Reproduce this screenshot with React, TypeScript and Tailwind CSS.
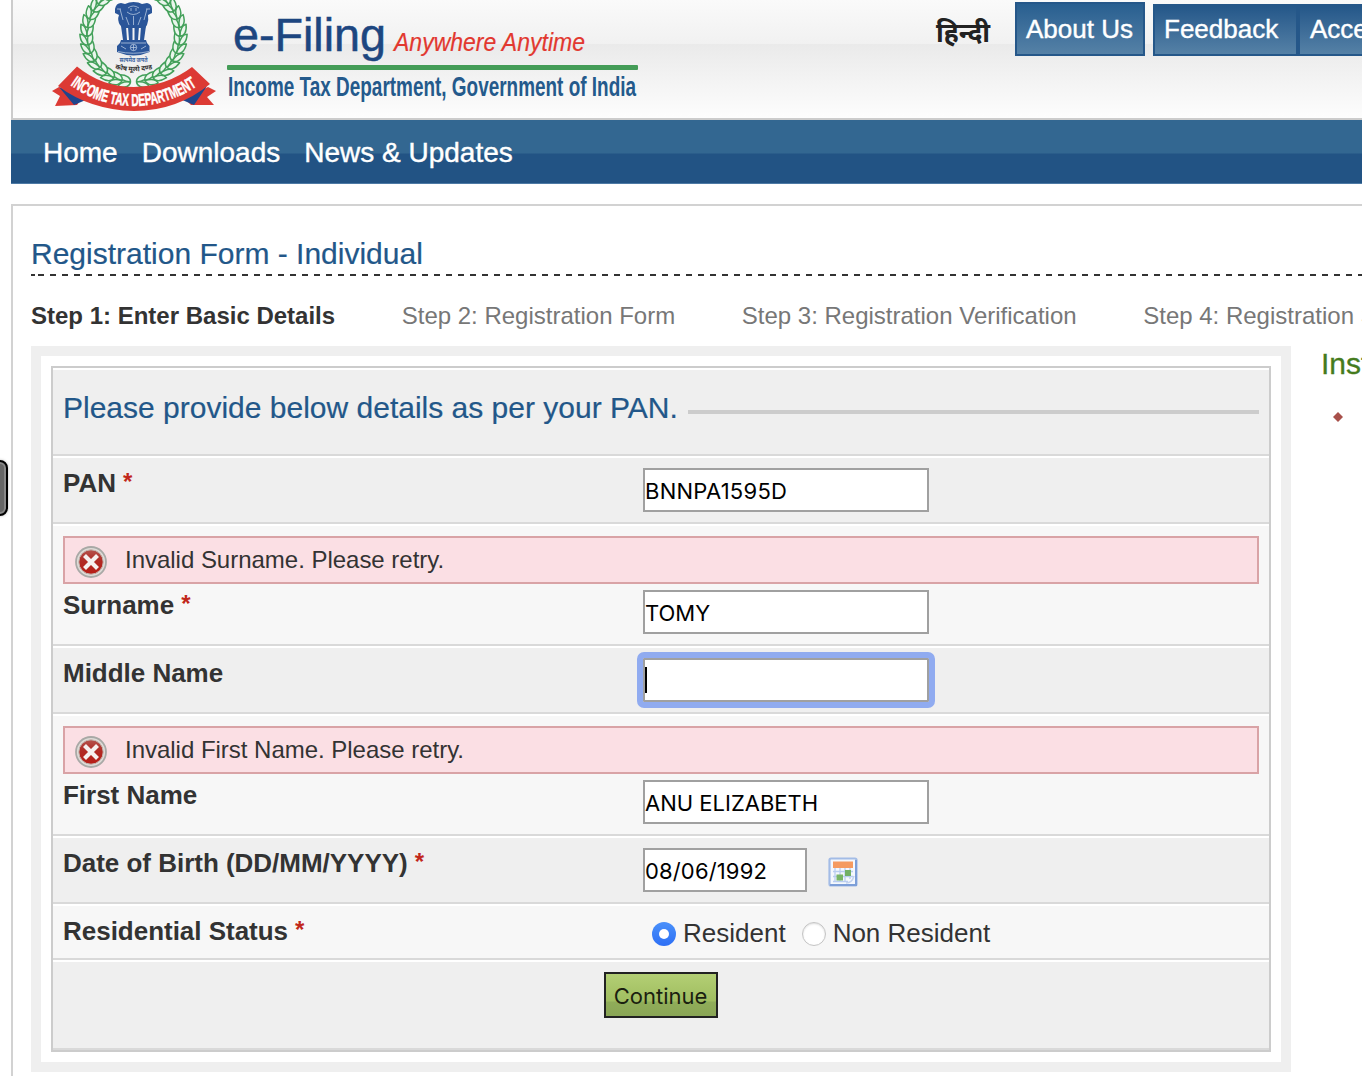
import React from 'react'

const sans = "font-['Liberation_Sans',Arial,sans-serif]"

function Txt({ x, y, size, w, children, fill, weight, italic, stroke, family = 'Liberation Sans, Arial, sans-serif' }: any) {
  return (
    <text x={x} y={y} fontSize={size} textLength={w} lengthAdjust="spacingAndGlyphs" fill={fill} stroke={stroke ? fill : undefined} strokeWidth={stroke} fontWeight={weight} fontStyle={italic ? 'italic' : undefined} fontFamily={family}>
      {children}
    </text>
  )
}

function Emblem() {
  const cx = 83.5
  const cy = 35
  const leaves: React.ReactNode[] = []
  for (let i = 0; i < 15; i++) {
    const a = 5 + i * 10.6
    for (const s of [-1, 1]) {
      const t = ((90 + s * a) * Math.PI) / 180
      const px = cx + 46.5 * Math.cos(t)
      const py = cy + 47 * Math.sin(t)
      const rot = 90 + s * a + s * 90
      leaves.push(
        <g key={`${i}${s}`} transform={`translate(${px} ${py}) rotate(${rot})`}>
          <path d="M-1 0C-1 -4 3 -7 11 -6C10 -2 6 0 -1 0Z" />
          <path d="M-1 0C-1 4 3 7 11 6C10 2 6 0 -1 0Z" />
        </g>,
      )
    }
  }
  return (
    <svg width="168" height="118" viewBox="0 0 168 118" className="block overflow-hidden">
      <g fill="#eaf6ec" stroke="#43a05a" strokeWidth="1.5" strokeLinejoin="round">{leaves}</g>
      <g fill="#2a5599">
        <path d="M75 4Q79 2 83.500 2Q89 2 92 4L97 3Q102 4 102 9L102 13L98 15Q99 20 97 25L95 28H73L70 25Q67 20 69 15L65 13V9Q66 3 71 3Z" />
        <path d="M71 26H76L77 40H73ZM78 27H82.500V40H79ZM84.500 27H89L88 40H84.500ZM91 26H96L94 40H90Z" />
        <path d="M71 40H96L97 43L99.500 46V52Q84 59 67 52V46L70 43Z" />
      </g>
      <g stroke="#b4c7e0" fill="none" strokeWidth=".8">
        <path d="M78 8Q83 4 89 8M77 12Q83 17 90 12M76 17L79 25M91 17L88 25M83.500 16V25M70 9L73 20M97 9L94 20M67 9H71M96 9H100M81 8V11M86 8V11" />
        <path d="M71 43H96M68 51.500Q83 55 99 51.500" />
        <circle cx="83.5" cy="47.5" r="3.2" />
        <path d="M71 46l5 3M91 49l5 -3M83.500 44.500v6M80.500 47.500h6" />
      </g>
      <Txt x="69.5" y="61.8" size="6" w="28" fill="#3a639f" weight="700" family="Noto Sans Devanagari, Noto Sans, sans-serif">सत्यमेव जयते</Txt>
      <path id="motto" d="M64 68.500Q83 74 104 68.500" fill="none" />
      <text fontSize="6.8" fontWeight="700" fill="#333" fontFamily="Noto Sans Devanagari, Noto Sans, sans-serif">
        <textPath href="#motto" startOffset="1" textLength="38" lengthAdjust="spacingAndGlyphs">कोष मूलो दण्ड</textPath>
      </text>
      <path d="M9 87L2 91L10 96L5 106L27 105L32 98ZM158 87L166 91L157 97L164 105L141 105L134 98Z" fill="#dc3a34" />
      <path d="M9 87L24 105L38 99ZM157 86L144 105L130 99Z" fill="#20458c" />
      <path d="M27 66.500Q52 87 84 87Q117 86 142 67L160 84Q127 111 84 111Q40 110 8 86Z" fill="#dc3a34" />
      <path id="ribbon" d="M19.500 84.500Q49 106 84 106Q119 105.500 150 84" fill="none" />
      <text fontSize="17" fontWeight="700" fill="#fff" stroke="#fff" strokeWidth=".5" fontFamily="Liberation Sans Narrow, Liberation Sans, Arial, sans-serif">
        <textPath href="#ribbon" startOffset="1" textLength="135" lengthAdjust="spacingAndGlyphs">INCOME TAX DEPARTMENT</textPath>
      </text>
    </svg>
  )
}

function Wordmark() {
  return (
    <svg width="420" height="118" viewBox="0 0 420 118" className="block overflow-visible">
      <Txt x="13" y="51" size="46" w="153" fill="#1d4680" stroke=".5">e-Filing</Txt>
      <Txt x="174" y="51" size="26.5" w="191" fill="#e2382f" italic stroke=".2">Anywhere Anytime</Txt>
      <rect x="7" y="65" width="411" height="5" rx="1" fill="#449c57" />
      <Txt x="8" y="95.5" size="27" w="408" fill="#245a8c" weight="700">Income Tax Department, Government of India</Txt>
    </svg>
  )
}

function ErrorIcon() {
  return (
    <svg width="32" height="32" viewBox="0 0 32 32">
      <defs>
        <linearGradient id="err" x1="0" y1="0" x2="0" y2="1">
          <stop offset="0" stopColor="#b4544e" />
          <stop offset=".45" stopColor="#b02a24" />
          <stop offset="1" stopColor="#b81d16" />
        </linearGradient>
      </defs>
      <circle cx="16" cy="16" r="15" fill="#dedcd8" stroke="#a9a9a6" strokeWidth="1.8" />
      <circle cx="16" cy="16" r="12.2" fill="url(#err)" stroke="#c4b5b0" strokeWidth="1" />
      <path d="M9.500 9.500L22.500 22.500M22.500 9.500L9.500 22.500" stroke="#f6f1f0" strokeWidth="4.200" strokeLinecap="butt" />
    </svg>
  )
}

function CalendarIcon() {
  return (
    <svg width="30" height="30" viewBox="0 0 30 30">
      <rect x="1.500" y="1.500" width="27" height="27" rx="1.500" fill="#f5f8fd" stroke="#a3bce6" strokeWidth="2.200" />
      <path d="M2 28H28V3" fill="none" stroke="#7d9fd8" strokeWidth="2" />
      <path d="M5 14.500H25M5 19.500H25M5 24.500H20M7 11V25M12 11V25M17 11V25M22 11V22" stroke="#b9cdf0" strokeWidth="1.300" />
      <rect x="5" y="4.500" width="20" height="6.500" fill="#f59a60" />
      <rect x="8.500" y="17.500" width="6.500" height="6" fill="#79b569" />
      <rect x="17" y="13" width="6" height="6" fill="#72b066" />
      <path d="M18 26Q24 26 26 19" fill="none" stroke="#c3d3ee" strokeWidth="1.500" />
    </svg>
  )
}

function Row({ h, light, children }: { h: string; light?: boolean; children: React.ReactNode }) {
  return (
    <div className={`${h} border-t-2 border-b-2 border-t-white border-b-[#d9d9d9] px-2.5 ${light ? 'bg-[#f7f7f7]' : 'bg-[#efefef]'}`}>{children}</div>
  )
}

function Label({ children, required }: { children: string; required?: boolean }) {
  return (
    <div className="w-[580px] shrink-0 whitespace-nowrap text-[26px] font-bold leading-[30px] tracking-[-0.02px] text-[#333]">
      {children}
      {required && <span className="ml-[7px] inline-block -translate-y-0.5 text-2xl leading-none text-[#c1271b]">*</span>}
    </div>
  )
}

function Field({ value, width = 'w-[286px]', tracking = '', focused }: { value: string; width?: string; tracking?: string; focused?: boolean }) {
  return (
    <div className={`${width} flex h-11 shrink-0 items-center border-2 border-[#a0a0a0] bg-white pt-0.5 font-[Inter,sans-serif] text-[22px] text-black ${focused ? 'outline-[6px] outline-[#90abf0] rounded-[1px]' : ''}`}>
      {focused ? <span className="-mt-0.5 h-[26px] w-0.5 bg-black" /> : <span className={`whitespace-pre ${tracking}`}>{value}</span>}
    </div>
  )
}

function Alert({ children }: { children: string }) {
  return (
    <div className="flex h-12 items-center border-2 border-[#d9a3a6] bg-[#fbdfe4] pl-2.5 text-2xl text-[#333]">
      <span className="flex pt-1"><ErrorIcon /></span>
      <span className="pl-[18px] tracking-[-0.02px]">{children}</span>
    </div>
  )
}

export default function App() {
  return (
    <div className={`relative h-[1076px] w-[1362px] overflow-hidden bg-white ${sans}`}>
      <div className="absolute -left-5 top-[460px] h-14 w-7 rounded-lg border-2 border-black bg-[#666] shadow-[inset_0_0_0_2px_#888,0_0_3px_#bbb]" />
      <div className="ml-[11px] w-[1351px] overflow-hidden">
        <header className="flex h-[120px] border-b-2 border-l-2 border-[#ccc] bg-[linear-gradient(#fafafa_0,#f1f1f1_44px,#eaeaea_44px,#fdfdfd_118px)]">
          <div className="ml-[37px] w-[170px] shrink-0"><Emblem /></div>
          <div className="w-[715px] shrink-0"><Wordmark /></div>
          <svg width="56" height="50" viewBox="0 0 56 50" className="shrink-0">
            <Txt x="1" y="42" size="27" w="54" fill="#222" weight="700" family="Noto Sans Devanagari, Noto Sans, sans-serif">हिन्दी</Txt>
          </svg>
          <div className="ml-6 flex shrink-0 text-[26px] leading-[32px] text-white [-webkit-text-stroke:0.4px_white]">
            <div className="mt-0.5 h-[54px] w-[130px] whitespace-nowrap border-2 border-[#255789] bg-linear-to-b from-[#285f90] to-[#5581a6] pl-[9px] pt-[9px]">About Us</div>
            <div className="ml-2 mt-1 h-[52px] w-[145px] whitespace-nowrap border-2 border-[#255789] bg-linear-to-b from-[#245789] to-[#5581a6] pl-[9px] pt-[7px]">Feedback</div>
            <div className="mt-1 h-[52px] w-[180px] whitespace-nowrap border-2 border-[#255789] bg-linear-to-b from-[#245789] to-[#5581a6] pl-[10px] pt-[7px]">Accessibility</div>
          </div>
        </header>
        <nav className="flex h-16 items-center gap-6 border-b border-[#4d7aa5] bg-[linear-gradient(#336791_0,#336791_33px,#225384_34px,#225384_100%)] pl-8 pt-[3px] text-[28px] text-white [-webkit-text-stroke:0.4px_white]">
          <span>Home</span>
          <span>Downloads</span>
          <span>News &amp; Updates</span>
        </nav>
        <main className="mt-5 h-[880px] border-l-2 border-t-2 border-[#d2d2d2] pl-[18px]">
          <h1 className="pt-[30px] text-[30px] leading-9 text-[#225789] [-webkit-text-stroke:0.2px_#225789]">Registration Form - Individual</h1>
          <div className="mt-0.5 flex h-0.5 gap-[3px]">
            <div className="w-1 bg-[#333]" />
            <div className="flex-1 bg-[repeating-linear-gradient(90deg,#333_0,#333_6px,transparent_6px,transparent_12px)]" />
          </div>
          <div className="flex h-[70px] items-center gap-[66.6px] whitespace-nowrap pt-2.5 text-2xl text-[#777]">
            <span className="font-bold text-[#333]">Step 1: Enter Basic Details</span>
            <span>Step 2: Registration Form</span>
            <span>Step 3: Registration Verification</span>
            <span>Step 4: Registration Successful</span>
          </div>
          <div className="flex">
            <section className="w-[1260px] shrink-0 border-[10px] border-[#efefef] p-2.5">
              <div className="border-2 border-[#ccc]">
                <Row h="h-[88px]">
                  <div className="flex items-center pt-5">
                    <h2 className="whitespace-nowrap text-[30px] leading-9 text-[#225789] [-webkit-text-stroke:0.2px_#225789]">Please provide below details as per your PAN.</h2>
                    <div className="ml-2.5 mt-2 h-1 flex-1 bg-[#ccc]" />
                  </div>
                </Row>
                <Row h="h-[68px]">
                  <div className="flex pt-2.5"><Label required>PAN</Label><Field value="BNNPA1595D" tracking="tracking-[0.25px]" /></div>
                </Row>
                <Row h="h-[122px]" light>
                  <div className="pt-2.5"><Alert>Invalid Surname. Please retry.</Alert></div>
                  <div className="flex pt-1.5"><Label required>Surname</Label><Field value="TOMY" /></div>
                </Row>
                <Row h="h-[68px]">
                  <div className="flex pt-2.5"><Label>Middle Name</Label><Field value="" focused /></div>
                </Row>
                <Row h="h-[122px]" light>
                  <div className="pt-2.5"><Alert>Invalid First Name. Please retry.</Alert></div>
                  <div className="flex pt-1.5"><Label>First Name</Label><Field value="ANU ELIZABETH" /></div>
                </Row>
                <Row h="h-[68px]">
                  <div className="flex pt-2.5">
                    <Label required>Date of Birth (DD/MM/YYYY)</Label>
                    <Field value="08/06/1992" width="w-[164px]" tracking="tracking-[0.15px]" />
                    <span className="ml-[21px] mt-[9px]"><CalendarIcon /></span>
                  </div>
                </Row>
                <Row h="h-[56px]" light>
                  <div className="flex pt-2.5">
                    <Label required>Residential Status</Label>
                    <div className="flex items-center pl-[9px] pt-0.5 text-[26px] leading-[30px] text-[#333]">
                      <span className="mt-0.5 flex size-6 items-center justify-center rounded-full bg-linear-to-b from-[#4a90fa] to-[#2e6ff5]"><span className="size-2.5 rounded-full bg-white" /></span>
                      <span className="ml-[7px]">Resident</span>
                      <span className="ml-4 mt-0.5 size-6 rounded-full border border-[#c4c4c4] bg-white shadow-[inset_0_1px_2px_#ddd]" />
                      <span className="ml-[7px]">Non Resident</span>
                    </div>
                  </div>
                </Row>
                <Row h="h-[90px]">
                  <div className="flex justify-center pt-2.5">
                    <button className="h-[46px] w-[114px] border-2 border-[#222] bg-[linear-gradient(#b3cf74_0,#a0bd60_65%,#90ad59_66%,#8aa656_100%)] pr-px pt-0.5 font-[Inter,sans-serif] text-[22px] text-[#1b1f10]">Continue</button>
                  </div>
                </Row>
              </div>
            </section>
            <aside className="shrink-0 pl-[30px]">
              <h2 className="text-[30px] leading-9 text-[#457b1d] [-webkit-text-stroke:0.3px_#457b1d]">Instructions</h2>
              <svg width="10" height="10" viewBox="0 0 10 10" className="ml-3 mt-[30px]"><path d="M5 0L10 5L5 10L0 5Z" fill="#a8504a" /></svg>
            </aside>
          </div>
        </main>
      </div>
    </div>
  )
}
